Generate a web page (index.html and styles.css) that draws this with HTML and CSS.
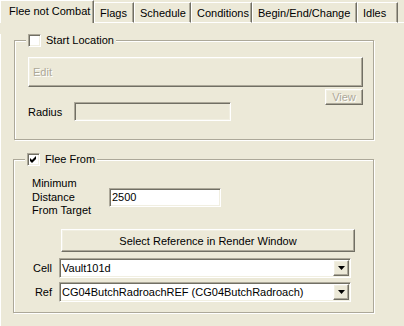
FILE: index.html
```html
<!DOCTYPE html>
<html>
<head>
<meta charset="utf-8">
<title>Flee not Combat</title>
<link rel="stylesheet" href="styles.css">
</head>
<body>
<div class="dlg">
  <div class="tabs">
    <div class="tab sel w-flee">Flee not Combat</div>
    <div class="tab w-flags">Flags</div>
    <div class="tab w-sched">Schedule</div>
    <div class="tab w-cond">Conditions</div>
    <div class="tab w-begin">Begin/End/Change</div>
    <div class="tab w-idles">Idles</div>
    <div class="tab-fill"></div>
  </div>
  <div class="panel">
    <fieldset class="group g1">
      <legend class="legend"><span class="lg"><span class="chk"></span><span>Start Location</span></span></legend>
      <div class="btn edit disabled">Edit</div>
      <div class="rv-row">
        <div class="radius">
          <span class="rlbl">Radius</span>
          <span class="field rfield"></span>
        </div>
        <div class="btn view disabled">View</div>
      </div>
    </fieldset>
    <fieldset class="group g2">
      <legend class="legend"><span class="lg"><span class="chk"><svg class="tick" width="11" height="11" viewBox="1 1 11 11"><polygon points="3,5 5,7 9,3 9,6 5,10 3,8" fill="#000"/></svg></span><span>Flee From</span></span></legend>
      <div class="dist-row">
        <div class="dist-lbl">Minimum<br>Distance<br>From Target</div>
        <div class="field dfield">2500</div>
      </div>
      <div class="btn selbtn">Select Reference in Render Window</div>
      <div class="crow">
        <span class="clbl">Cell</span>
        <div class="field combo">
          <span class="ctext">Vault101d</span>
          <span class="btn arrow"><svg width="7" height="4" viewBox="0 0 7 4"><polygon points="0,0 7,0 3.5,4" fill="#000"/></svg></span>
        </div>
      </div>
      <div class="crow">
        <span class="clbl">Ref</span>
        <div class="field combo">
          <span class="ctext">CG04ButchRadroachREF (CG04ButchRadroach)</span>
          <span class="btn arrow"><svg width="7" height="4" viewBox="0 0 7 4"><polygon points="0,0 7,0 3.5,4" fill="#000"/></svg></span>
        </div>
      </div>
    </fieldset>
  </div>
</div>
</body>
</html>
```
FILE: styles.css
```css
* { box-sizing: border-box; }
html, body { margin: 0; padding: 0; background: #ECE9D8; }
body {
  font-family: "Liberation Sans", Arial, sans-serif;
  font-size: 11px;
  color: #000;
  width: 404px;
  height: 326px;
  overflow: hidden;
}

/* tabs */
.tabs { display: flex; align-items: flex-end; height: 23px; }
.tab {
  height: 21px;
  border-top: 1px solid #fff;
  border-left: 1px solid #fff;
  border-right: 1px solid #716F64;
  border-bottom: 1px solid #fff;
  box-shadow: inset -1px 0 #ACA899;
  padding: 4px 0 0 5px;
  line-height: 13px;
  white-space: nowrap;
  overflow: hidden;
  flex: none;
}
.tab.sel { height: 23px; border-bottom: 0; padding-left: 8px; }
.w-flee { width: 94px; }
.w-flags { width: 40px; }
.w-sched { width: 57px; }
.w-cond { width: 61px; }
.w-begin { width: 105px; }
.w-idles { width: 41px; }
.tab-fill { flex: 1; border-bottom: 1px solid #fff; }

/* panel */
.panel { border-left: 1px solid #fff; height: 303px; }

.group {
  margin: 0;
  border: 1px solid #ACA899;
  box-shadow: inset 1px 1px #fff, 1px 1px #fff;
  min-width: 0;
}
.g1 { margin: 11px 0 0 13px; width: 360px; padding: 10px 10px 18px 13px; }
.g2 { margin: 13px 0 0 12px; width: 361px; padding: 11px 0 10px 13px; }

.legend {
  padding: 0 2px;
  margin-left: -2px;
  background: #ECE9D8;
  height: 13px;
  line-height: 13px;
}
.lg { display: flex; align-items: center; height: 13px; }

.chk {
  width: 13px;
  height: 13px;
  flex: none;
  background: #fff;
  border: 1px solid;
  border-color: #ACA899 #fff #fff #ACA899;
  box-shadow: inset 1px 1px #716F64, inset -1px -1px #F1EFE2;
  margin-right: 5px;
}
.tick { display: block; }

/* controls */
.btn {
  border: 1px solid;
  border-color: #fff #716F64 #716F64 #fff;
  box-shadow: inset -1px -1px #ACA899, inset 1px 1px #F1EFE2;
  background: #ECE9D8;
  display: flex;
  align-items: center;
  white-space: nowrap;
}
.disabled { color: #ACA899; text-shadow: 1px 1px 0 #fff; }

.field {
  height: 19px;
  border: 1px solid;
  border-color: #ACA899 #fff #fff #ACA899;
  box-shadow: inset 1px 1px #716F64, inset -1px -1px #F1EFE2;
}

.edit { width: 335px; height: 30px; padding-left: 4px; }

.rv-row {
  display: flex;
  justify-content: space-between;
  align-items: flex-start;
  margin-top: 2px;
}
.radius { display: flex; align-items: center; margin-top: 13px; }
.rlbl { width: 46px; }
.rfield { width: 157px; }
.view { width: 38px; height: 16px; justify-content: center; }

.dist-row { display: flex; align-items: center; }
.dist-lbl { width: 77px; margin-left: 5px; line-height: 13.5px; }
.dfield {
  width: 112px;
  background: #fff;
  padding-left: 2px;
  display: flex;
  align-items: center;
}

.selbtn { width: 294px; height: 23px; margin: 11.5px 0 0 34px; justify-content: center; }

.crow { display: flex; align-items: center; margin-top: 6px; }
.crow + .crow { margin-top: 4px; }
.clbl { width: 25px; text-align: right; margin-right: 7px; flex: none; }
.combo {
  width: 292px;
  height: 20px;
  background: #fff;
  padding: 1px;
  display: flex;
  align-items: stretch;
}
.ctext {
  flex: 1;
  padding-left: 1px;
  display: flex;
  align-items: center;
  white-space: nowrap;
  overflow: hidden;
}
.arrow { width: 16px; flex: none; justify-content: center; }
.arrow svg { display: block; }
```
